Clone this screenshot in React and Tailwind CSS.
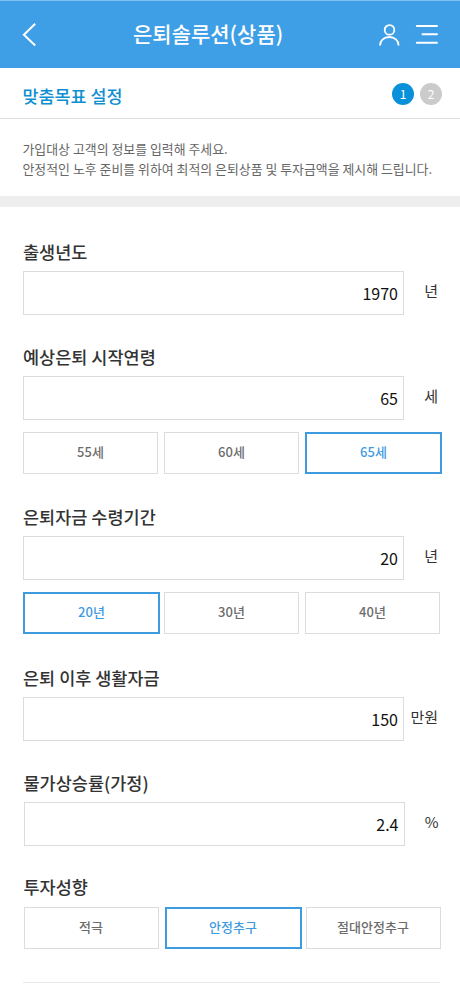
import React from "react";

function Header() {
  return (
    <header className="flex h-[68px] items-center border-t border-[#7fc0f0] bg-[#3f9fe6] pl-[22px] pr-[22px]">
      <svg className="h-6 w-[14px] shrink-0" viewBox="0 0 14 24" fill="none" stroke="#fff" strokeWidth="2">
        <path d="M13.200 0.800 1.900 11.700 13.200 22.400" />
      </svg>
      <h1 className="ml-[97px] whitespace-nowrap pb-[3px] text-[21px] font-medium leading-8 text-white">은퇴솔루션(상품)</h1>
      <div className="ml-auto flex items-center gap-[15px]">
        <svg className="h-[22px] w-[22px]" viewBox="0 0 22 22" fill="none" stroke="#fff" strokeWidth="1.8">
          <circle cx="11.500" cy="5.900" r="4.800" />
          <path d="M2 21.500c0-5 4-8.500 9.300-8.500s9.300 3.500 9.300 8.500" />
        </svg>
        <svg className="h-[22px] w-[23px]" viewBox="0 0 23 22" stroke="#fff" strokeWidth="1.900" strokeLinecap="round">
          <path d="M1.800 2H22M7.500 10.200H22M1.800 18.800H22" />
        </svg>
      </div>
    </header>
  );
}

function Label({ children }) {
  return <div className="h-6 whitespace-nowrap text-[17.5px] font-medium leading-[23px] text-[#333]">{children}</div>;
}

function Field({ value, unit, className }) {
  return (
    <div className={`flex h-[44px] ${className}`}>
      <div className="flex w-[381px] items-center justify-end border border-[#dcdcdc] pr-[5px] text-[16px] text-[#111]">
        {value}
      </div>
      <div className="flex w-[34px] justify-end whitespace-nowrap pt-[9px] text-[15px] leading-[22px] text-[#333]">{unit}</div>
    </div>
  );
}

function Options({ items, active, className }) {
  return (
    <div className={`flex h-[42px] ${className}`}>
      {items.map((item, i) => (
        <div key={item} className="w-[141px] shrink-0">
          <div
            className={
              i === active
                ? "flex h-[42px] w-[137px] items-center justify-center border-2 border-[#3f9be0] pb-[3px] text-[13px] font-medium text-[#3f9be0]"
                : "flex h-[42px] w-[135px] items-center justify-center border border-[#dcdcdc] pb-[3px] text-[13px] font-medium text-[#6c6c6c]"
            }
          >
            {item}
          </div>
        </div>
      ))}
    </div>
  );
}

export default function App() {
  return (
    <div className="h-[996px] w-[460px] overflow-hidden bg-white font-['Noto_Sans_CJK_KR','Noto_Sans',sans-serif]">
      <Header />
      <div className="flex h-[51px] items-center justify-between border-b border-[#dcdcdc] pl-[22.5px] pr-[18px]">
        <h2 className="pt-[6px] text-[17.4px] font-medium leading-6 text-[#0d8fd2]">맞춤목표 설정</h2>
        <div className="flex gap-[6px] pt-[2px] text-[12px] text-white">
          <span className="flex h-[22px] w-[22px] items-center justify-center rounded-full bg-[#0990db]">1</span>
          <span className="flex h-[22px] w-[22px] items-center justify-center rounded-full bg-[#cbcbcb]">2</span>
        </div>
      </div>
      <p className="h-[77px] whitespace-nowrap pl-[22.5px] pt-[20px] text-[12.92px] leading-5 text-[#666]">
        가입대상 고객의 정보를 입력해 주세요.
        <br />
        안정적인 노후 준비를 위하여 최적의 은퇴상품 및 투자금액을 제시해 드립니다.
      </p>
      <div className="h-[11px] bg-[#eee]" />

      <main className="pl-[23px] pt-[33px]">
        <section>
          <Label>출생년도</Label>
          <Field value="1970" unit="년" className="mt-[7px]" />
        </section>
        <section className="mt-[30px]">
          <Label>예상은퇴 시작연령</Label>
          <Field value="65" unit="세" className="mt-[7px]" />
          <Options items={["55세", "60세", "65세"]} active={2} className="mt-[12px]" />
        </section>
        <section className="mt-[31px]">
          <Label>은퇴자금 수령기간</Label>
          <Field value="20" unit="년" className="mt-[7px]" />
          <Options items={["20년", "30년", "40년"]} active={0} className="mt-[12px]" />
        </section>
        <section className="mt-[32px]">
          <Label>은퇴 이후 생활자금</Label>
          <Field value="150" unit="만원" className="mt-[7px]" />
        </section>
        <section className="ml-[0.5px] mt-[30px]">
          <Label>물가상승률(가정)</Label>
          <Field value="2.4" unit="%" className="mt-[7px]" />
        </section>
        <section className="ml-[0.5px] mt-[29px]">
          <Label>투자성향</Label>
          <Options items={["적극", "안정추구", "절대안정추구"]} active={1} className="mt-[8px]" />
        </section>
        <hr className="mt-[33px] w-[417px] border-[#e8e8e8]" />
      </main>
    </div>
  );
}
